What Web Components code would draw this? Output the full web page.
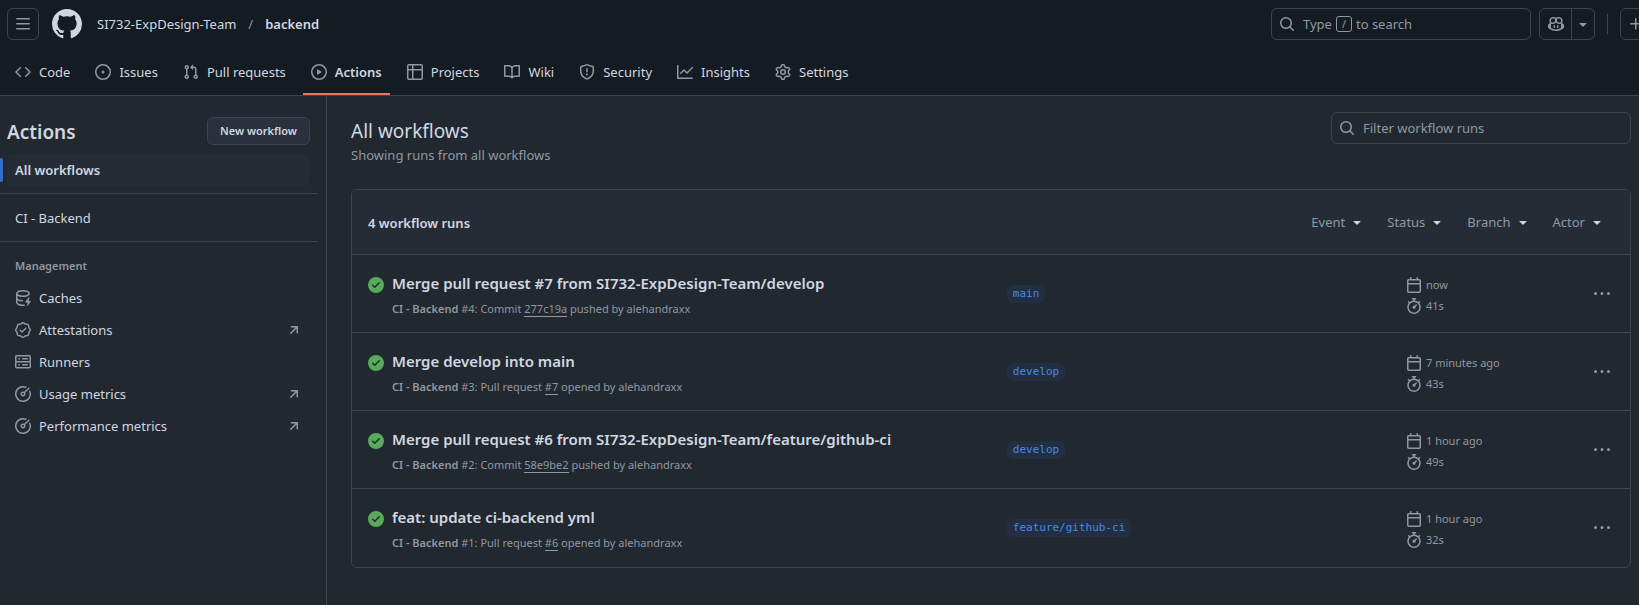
<!DOCTYPE html>
<html lang="en">
<head>
<meta charset="utf-8">
<meta name="viewport" content="width=device-width, initial-scale=1">
<title>Actions · SI732-ExpDesign-Team/backend</title>
<style>
  :root {
    --bg: #212830;
    --bg-inset: #151b23;
    --bg-raised: #262c36;
    --bg-button: #2a313c;
    --line: #3d444d;
    --fg: #d1d7e0;
    --muted: #9198a1;
    --accent: #478be6;
    --accent-strong: #316dca;
    --success: #57ab5a;
    --tab-line: #ec775c;
    --text-s: 11px;
    --text-m: 13px;
    --text-l: 15px;
    --text-xl: 19px;
  }
  body {
    margin: 0;
    min-height: 100vh;
    background: var(--bg);
    color: var(--fg);
    font: 13px/20px "Noto Sans", "Open Sans", sans-serif;
  }
</style>
</head>
<body>
<actions-page></actions-page>

<script>
const ICONS = {
  bars: 'M1 2.75A.75.75 0 0 1 1.75 2h12.5a.75.75 0 0 1 0 1.5H1.75A.75.75 0 0 1 1 2.75Zm0 5A.75.75 0 0 1 1.75 7h12.5a.75.75 0 0 1 0 1.5H1.75A.75.75 0 0 1 1 7.75ZM1.75 12h12.5a.75.75 0 0 1 0 1.5H1.75a.75.75 0 0 1 0-1.5Z',
  mark: 'M8 0c4.42 0 8 3.58 8 8a8.013 8.013 0 0 1-5.45 7.59c-.4.08-.55-.17-.55-.38 0-.27.01-1.13.01-2.2 0-.75-.25-1.23-.54-1.48 1.78-.2 3.65-.88 3.65-3.95 0-.88-.31-1.59-.82-2.15.08-.2.36-1.02-.08-2.12 0 0-.67-.22-2.2.82-.64-.18-1.32-.27-2-.27-.68 0-1.36.09-2 .27-1.53-1.03-2.2-.82-2.2-.82-.44 1.1-.16 1.92-.08 2.12-.51.56-.82 1.28-.82 2.15 0 3.06 1.86 3.75 3.64 3.95-.23.2-.44.55-.51 1.07-.46.21-1.61.55-2.33-.66-.15-.24-.6-.83-1.23-.82-.67.01-.27.38.01.53.34.19.73.9.82 1.13.16.45.68 1.31 2.69.94 0 .67.01 1.3.01 1.49 0 .21-.15.45-.55.38A7.995 7.995 0 0 1 0 8c0-4.42 3.58-8 8-8Z',
  search: 'M10.68 11.74a6 6 0 0 1-7.922-8.982 6 6 0 0 1 8.982 7.922l3.04 3.04a.749.749 0 0 1-.326 1.275.749.749 0 0 1-.734-.215ZM11.5 7a4.499 4.499 0 1 0-8.997 0A4.499 4.499 0 0 0 11.5 7Z',
  copilot: 'M7.998 15.035c-4.562 0-7.873-2.914-7.998-3.749V9.338c.085-.628.677-1.686 1.588-2.065.013-.07.024-.143.036-.218.029-.183.06-.384.126-.612-.201-.508-.254-1.084-.254-1.656 0-.87.128-1.769.693-2.484.579-.733 1.494-1.124 2.724-1.261 1.206-.134 2.262.034 2.944.765.05.053.096.108.139.165.044-.057.094-.112.143-.165.682-.731 1.738-.899 2.944-.765 1.23.137 2.145.528 2.724 1.261.566.715.693 1.614.693 2.484 0 .572-.053 1.148-.254 1.656.066.228.098.429.126.612.012.076.024.148.037.218.924.385 1.522 1.471 1.591 2.095v1.872c0 .766-3.351 3.795-8.002 3.795Zm0-1.485c2.28 0 4.584-1.11 5.002-1.433V7.862l-.023-.116c-.49.21-1.075.291-1.727.291-1.146 0-2.059-.327-2.71-.991A3.222 3.222 0 0 1 8 6.303a3.24 3.24 0 0 1-.544.743c-.65.664-1.563.991-2.71.991-.652 0-1.236-.081-1.727-.291l-.023.116v4.255c.419.323 2.722 1.433 5.002 1.433ZM6.762 2.83c-.193-.206-.637-.413-1.682-.297-1.019.113-1.479.404-1.713.7-.247.312-.369.789-.369 1.554 0 .793.129 1.171.308 1.371.162.181.519.379 1.442.379.853 0 1.339-.235 1.638-.54.315-.322.527-.827.617-1.553.117-.935-.037-1.395-.241-1.614Zm4.155-.297c-1.044-.116-1.488.091-1.681.297-.204.219-.359.679-.242 1.614.091.726.303 1.231.618 1.553.299.305.784.54 1.638.54.922 0 1.28-.198 1.442-.379.179-.2.308-.578.308-1.371 0-.765-.123-1.242-.37-1.554-.233-.296-.693-.587-1.713-.7ZM6.25 9.037a.75.75 0 0 1 .75.75v1.501a.75.75 0 0 1-1.5 0V9.787a.75.75 0 0 1 .75-.75Zm4.25.75v1.501a.75.75 0 0 1-1.5 0V9.787a.75.75 0 0 1 1.5 0Z',
  caret: 'm4.427 7.427 3.396 3.396a.25.25 0 0 0 .354 0l3.396-3.396A.25.25 0 0 0 11.396 7H4.604a.25.25 0 0 0-.177.427Z',
  plus: 'M7.75 2a.75.75 0 0 1 .75.75V7h4.25a.75.75 0 0 1 0 1.5H8.5v4.25a.75.75 0 0 1-1.5 0V8.5H2.75a.75.75 0 0 1 0-1.5H7V2.75A.75.75 0 0 1 7.75 2Z',
  code: 'm11.28 3.22 4.25 4.25a.75.75 0 0 1 0 1.06l-4.25 4.25a.749.749 0 0 1-1.275-.326.749.749 0 0 1 .215-.734L13.94 8l-3.72-3.72a.749.749 0 0 1 .326-1.275.749.749 0 0 1 .734.215Zm-6.56 0a.751.751 0 0 1 1.042.018.751.751 0 0 1 .018 1.042L2.06 8l3.72 3.72a.749.749 0 0 1-.326 1.275.749.749 0 0 1-.734-.215L.47 8.53a.75.75 0 0 1 0-1.06Z',
  issue: 'M8 9.5a1.5 1.5 0 1 0 0-3 1.5 1.5 0 0 0 0 3ZM8 0a8 8 0 1 1 0 16A8 8 0 0 1 8 0ZM1.5 8a6.5 6.5 0 1 0 13 0 6.5 6.5 0 0 0-13 0Z',
  pull: 'M1.5 3.25a2.25 2.25 0 1 1 3 2.122v5.256a2.251 2.251 0 1 1-1.5 0V5.372A2.25 2.25 0 0 1 1.5 3.25Zm5.677-.177L9.573.677A.25.25 0 0 1 10 .854V2.5h1A2.5 2.5 0 0 1 13.5 5v5.628a2.251 2.251 0 1 1-1.5 0V5a1 1 0 0 0-1-1h-1v1.646a.25.25 0 0 1-.427.177L7.177 3.427a.25.25 0 0 1 0-.354ZM3.75 2.5a.75.75 0 1 0 0 1.5.75.75 0 0 0 0-1.5Zm0 9.5a.75.75 0 1 0 0 1.5.75.75 0 0 0 0-1.5Zm8.25.75a.75.75 0 1 0 1.5 0 .75.75 0 0 0-1.5 0Z',
  play: 'M8 0a8 8 0 1 1 0 16A8 8 0 0 1 8 0ZM1.5 8a6.5 6.5 0 1 0 13 0 6.5 6.5 0 0 0-13 0Zm4.879-2.773 4.264 2.559a.25.25 0 0 1 0 .428l-4.264 2.559A.25.25 0 0 1 6 10.559V5.442a.25.25 0 0 1 .379-.215Z',
  table: 'M0 1.75C0 .784.784 0 1.75 0h12.5C15.216 0 16 .784 16 1.75v12.5A1.75 1.75 0 0 1 14.25 16H1.75A1.75 1.75 0 0 1 0 14.25ZM6.5 6.5v8h7.75a.25.25 0 0 0 .25-.25V6.5Zm8-1.5V1.75a.25.25 0 0 0-.25-.25H6.5V5Zm-13 1.5v7.75c0 .138.112.25.25.25H5v-8ZM5 5V1.5H1.75a.25.25 0 0 0-.25.25V5Z',
  book: 'M0 1.75A.75.75 0 0 1 .75 1h4.253c1.227 0 2.317.59 3 1.501A3.743 3.743 0 0 1 11.006 1h4.245a.75.75 0 0 1 .75.75v10.5a.75.75 0 0 1-.75.75h-4.507a2.25 2.25 0 0 0-1.591.659l-.622.621a.75.75 0 0 1-1.06 0l-.622-.621A2.25 2.25 0 0 0 5.258 13H.75a.75.75 0 0 1-.75-.75Zm7.251 10.324.004-5.073-.002-2.253A2.25 2.25 0 0 0 5.003 2.5H1.5v9h3.757a3.75 3.75 0 0 1 1.994.574ZM8.755 4.75l-.004 7.322a3.752 3.752 0 0 1 1.992-.572H14.5v-9h-3.495a2.25 2.25 0 0 0-2.25 2.25Z',
  shield: 'M7.467.133a1.748 1.748 0 0 1 1.066 0l5.25 1.68A1.75 1.75 0 0 1 15 3.48V7c0 1.566-.32 3.182-1.303 4.682-.983 1.498-2.585 2.813-5.032 3.855a1.697 1.697 0 0 1-1.33 0c-2.447-1.042-4.049-2.357-5.032-3.855C1.32 10.182 1 8.566 1 7V3.48a1.75 1.75 0 0 1 1.217-1.667Zm.61 1.429a.25.25 0 0 0-.153 0l-5.25 1.68a.25.25 0 0 0-.174.238V7c0 1.358.275 2.666 1.057 3.86.784 1.194 2.121 2.34 4.366 3.297a.196.196 0 0 0 .154 0c2.245-.956 3.582-2.104 4.366-3.298C13.225 9.666 13.5 8.36 13.5 7V3.48a.251.251 0 0 0-.174-.237l-5.25-1.68ZM8.75 4.75v3a.75.75 0 0 1-1.5 0v-3a.75.75 0 0 1 1.5 0ZM9 10.5a1 1 0 1 1-2 0 1 1 0 0 1 2 0Z',
  graph: 'M1.5 1.75V13.5h13.75a.75.75 0 0 1 0 1.5H.75a.75.75 0 0 1-.75-.75V1.75a.75.75 0 0 1 1.5 0Zm14.28 2.53-5.25 5.25a.75.75 0 0 1-1.06 0L7 7.06 4.28 9.78a.751.751 0 0 1-1.042-.018.751.751 0 0 1-.018-1.042l3.25-3.25a.75.75 0 0 1 1.06 0L10 7.94l4.72-4.72a.751.751 0 0 1 1.042.018.751.751 0 0 1 .018 1.042Z',
  gear: 'M8 0a8.2 8.2 0 0 1 .701.031C9.444.095 9.99.645 10.16 1.29l.288 1.107c.018.066.079.158.212.224.231.114.454.243.668.386.123.082.233.09.299.071l1.103-.303c.644-.176 1.392.021 1.82.63.27.385.506.792.704 1.218.315.675.111 1.422-.364 1.891l-.814.806c-.049.048-.098.147-.088.294.016.257.016.515 0 .772-.01.147.038.246.088.294l.814.806c.475.469.679 1.216.364 1.891a7.977 7.977 0 0 1-.704 1.217c-.428.61-1.176.807-1.82.63l-1.102-.302c-.067-.019-.177-.011-.3.071a5.909 5.909 0 0 1-.668.386c-.133.066-.194.158-.211.224l-.29 1.106c-.168.646-.715 1.196-1.458 1.26a8.006 8.006 0 0 1-1.402 0c-.743-.064-1.289-.614-1.458-1.26l-.289-1.106c-.018-.066-.079-.158-.212-.224a5.738 5.738 0 0 1-.668-.386c-.123-.082-.233-.09-.299-.071l-1.103.303c-.644.176-1.392-.021-1.82-.63a8.12 8.12 0 0 1-.704-1.218c-.315-.675-.111-1.422.363-1.891l.815-.806c.05-.048.098-.147.088-.294a6.214 6.214 0 0 1 0-.772c.01-.147-.038-.246-.088-.294l-.815-.806C.635 6.045.431 5.298.746 4.623a7.92 7.92 0 0 1 .704-1.217c.428-.61 1.176-.807 1.82-.63l1.102.302c.067.019.177.011.3-.071.214-.143.437-.272.668-.386.133-.066.194-.158.211-.224l.29-1.106C6.009.645 6.556.095 7.299.03 7.53.01 7.764 0 8 0Zm-.571 1.525c-.036.003-.108.036-.137.146l-.289 1.105c-.147.561-.549.967-.998 1.189-.173.086-.34.183-.5.29-.417.278-.97.423-1.529.27l-1.103-.303c-.109-.03-.175.016-.195.045-.22.312-.412.644-.573.99-.014.031-.021.11.059.19l.815.806c.411.406.562.957.53 1.456a4.709 4.709 0 0 0 0 .582c.032.499-.119 1.05-.53 1.456l-.815.806c-.081.08-.073.159-.059.19.162.346.353.677.573.989.02.03.085.076.195.046l1.102-.303c.56-.153 1.113-.008 1.53.27.161.107.328.204.501.29.447.222.85.629.997 1.189l.289 1.105c.029.109.101.143.137.146a6.6 6.6 0 0 0 1.142 0c.036-.003.108-.036.137-.146l.289-1.105c.147-.561.549-.967.998-1.189.173-.086.34-.183.5-.29.417-.278.97-.423 1.529-.27l1.103.303c.109.029.175-.016.195-.045.22-.313.411-.644.573-.99.014-.031.021-.11-.059-.19l-.815-.806c-.411-.406-.562-.957-.53-1.456a4.709 4.709 0 0 0 0-.582c-.032-.499.119-1.05.53-1.456l.815-.806c.081-.08.073-.159.059-.19a6.464 6.464 0 0 0-.573-.989c-.02-.03-.085-.076-.195-.046l-1.102.303c-.56.153-1.113.008-1.53-.27a4.44 4.44 0 0 0-.501-.29c-.447-.222-.85-.629-.997-1.189l-.289-1.105c-.029-.11-.101-.143-.137-.146a6.6 6.6 0 0 0-1.142 0ZM11 8a3 3 0 1 1-6 0 3 3 0 0 1 6 0ZM9.5 8a1.5 1.5 0 1 0-3.001.001A1.5 1.5 0 0 0 9.5 8Z',
  cache: 'M2.5 5.724V8c0 .248.238.7 1.169 1.159.874.43 2.144.745 3.62.822a.75.75 0 1 1-.078 1.498c-1.622-.085-3.102-.432-4.204-.975a5.565 5.565 0 0 1-.507-.28V12.5c0 .133.058.318.282.551.227.237.591.483 1.101.707 1.015.447 2.47.742 4.117.742.406 0 .802-.018 1.183-.052a.751.751 0 1 1 .134 1.494C8.89 15.98 8.45 16 8 16c-1.805 0-3.475-.32-4.721-.869-.623-.274-1.173-.619-1.579-1.041-.408-.425-.7-.964-.7-1.59v-9c0-.626.292-1.165.7-1.591.406-.42.956-.766 1.579-1.04C4.525.32 6.195 0 8 0c1.806 0 3.476.32 4.721.869.623.274 1.173.619 1.579 1.041.408.425.7.964.7 1.59 0 .626-.292 1.165-.7 1.591-.406.42-.956.766-1.578 1.04C11.475 6.68 9.805 7 8 7c-1.805 0-3.475-.32-4.721-.869a6.15 6.15 0 0 1-.779-.407Zm0-2.224c0 .133.058.318.282.551.227.237.591.483 1.101.707C4.898 5.205 6.353 5.5 8 5.5c1.646 0 3.101-.295 4.118-.742.508-.224.873-.471 1.1-.708.224-.232.282-.417.282-.55 0-.133-.058-.318-.282-.551-.227-.237-.591-.483-1.101-.707C11.102 1.795 9.647 1.5 8 1.5c-1.646 0-3.101.295-4.118.742-.508.224-.873.471-1.1.708-.224.232-.282.417-.282.55ZM14.49 7.582a.375.375 0 0 0-.66-.313l-3.625 4.625a.375.375 0 0 0 .295.606h2.127l-.619 2.922a.375.375 0 0 0 .666.304l3.125-4.125A.375.375 0 0 0 15.5 11h-1.778l.769-3.418Z',
  verified: 'm9.585.52.929.68c.153.112.331.186.518.215l1.138.175a2.678 2.678 0 0 1 2.24 2.24l.174 1.139c.029.187.103.365.215.518l.68.928a2.677 2.677 0 0 1 0 3.17l-.68.928a1.174 1.174 0 0 0-.215.518l-.175 1.138a2.678 2.678 0 0 1-2.241 2.241l-1.138.175a1.17 1.17 0 0 0-.518.215l-.928.68a2.677 2.677 0 0 1-3.17 0l-.928-.68a1.174 1.174 0 0 0-.518-.215L3.83 14.41a2.678 2.678 0 0 1-2.24-2.24l-.175-1.138a1.17 1.17 0 0 0-.215-.518l-.68-.928a2.677 2.677 0 0 1 0-3.17l.68-.928c.112-.153.186-.331.215-.518l.175-1.14a2.678 2.678 0 0 1 2.24-2.24l1.139-.175c.187-.029.365-.103.518-.215l.928-.68a2.677 2.677 0 0 1 3.17 0ZM7.303 1.728l-.927.68a2.67 2.67 0 0 1-1.18.489l-1.137.174a1.179 1.179 0 0 0-.987.987l-.174 1.136a2.677 2.677 0 0 1-.489 1.18l-.68.928a1.18 1.18 0 0 0 0 1.394l.68.927c.256.348.424.753.489 1.18l.174 1.137c.078.509.478.909.987.987l1.136.174a2.67 2.67 0 0 1 1.18.489l.928.68c.414.305.979.305 1.394 0l.927-.68a2.67 2.67 0 0 1 1.18-.489l1.137-.174a1.18 1.18 0 0 0 .987-.987l.174-1.136a2.67 2.67 0 0 1 .489-1.18l.68-.928a1.176 1.176 0 0 0 0-1.394l-.68-.927a2.686 2.686 0 0 1-.489-1.18l-.174-1.137a1.179 1.179 0 0 0-.987-.987l-1.136-.174a2.677 2.677 0 0 1-1.18-.489l-.928-.68a1.176 1.176 0 0 0-1.394 0ZM11.28 6.78l-3.75 3.75a.75.75 0 0 1-1.06 0L4.72 8.78a.751.751 0 0 1 .018-1.042.751.751 0 0 1 1.042-.018L7 8.94l3.22-3.22a.751.751 0 0 1 1.042.018.751.751 0 0 1 .018 1.042Z',
  server: 'M1.75 1h12.5c.966 0 1.75.784 1.75 1.75v4c0 .372-.116.717-.314 1 .198.283.314.628.314 1v4a1.75 1.75 0 0 1-1.75 1.75H1.75A1.75 1.75 0 0 1 0 12.75v-4c0-.358.109-.707.314-1a1.739 1.739 0 0 1-.314-1v-4C0 1.784.784 1 1.75 1ZM1.5 2.75v4c0 .138.112.25.25.25h12.5a.25.25 0 0 0 .25-.25v-4a.25.25 0 0 0-.25-.25H1.75a.25.25 0 0 0-.25.25Zm.25 5.75a.25.25 0 0 0-.25.25v4c0 .138.112.25.25.25h12.5a.25.25 0 0 0 .25-.25v-4a.25.25 0 0 0-.25-.25ZM7 4.75A.75.75 0 0 1 7.75 4h4.5a.75.75 0 0 1 0 1.5h-4.5A.75.75 0 0 1 7 4.75ZM7.75 10h4.5a.75.75 0 0 1 0 1.5h-4.5a.75.75 0 0 1 0-1.5ZM3 4.75A.75.75 0 0 1 3.75 4h.5a.75.75 0 0 1 0 1.5h-.5A.75.75 0 0 1 3 4.75ZM3.75 10h.5a.75.75 0 0 1 0 1.5h-.5a.75.75 0 0 1 0-1.5Z',
  meter: 'M8 1.5a6.5 6.5 0 1 0 6.016 4.035.75.75 0 0 1 1.388-.57 8 8 0 1 1-4.37-4.37.75.75 0 0 1-.569 1.389A6.473 6.473 0 0 0 8 1.5Zm6.28.22a.75.75 0 0 1 0 1.06l-4.063 4.064a2.5 2.5 0 1 1-1.06-1.06L13.22 1.72a.75.75 0 0 1 1.06 0ZM7 8a1 1 0 1 0 2 0 1 1 0 0 0-2 0Z',
  external: 'M4.53 4.75A.75.75 0 0 1 5.28 4h6.01a.75.75 0 0 1 .75.75v6.01a.75.75 0 0 1-1.5 0v-4.2l-5.26 5.261a.749.749 0 0 1-1.275-.326.749.749 0 0 1 .215-.734L9.48 5.5h-4.2a.75.75 0 0 1-.75-.75Z',
  success: 'M8 16A8 8 0 1 1 8 0a8 8 0 0 1 0 16Zm3.78-9.72a.751.751 0 0 0-.018-1.042.751.751 0 0 0-1.042-.018L6.75 9.19 5.28 7.72a.751.751 0 0 0-1.042.018.751.751 0 0 0-.018 1.042l2 2a.75.75 0 0 0 1.06 0Z',
  calendar: 'M4.75 0a.75.75 0 0 1 .75.75V2h5V.75a.75.75 0 0 1 1.5 0V2h1.25c.966 0 1.75.784 1.75 1.75v10.5A1.75 1.75 0 0 1 13.25 16H2.75A1.75 1.75 0 0 1 1 14.25V3.75C1 2.784 1.784 2 2.75 2H4V.75A.75.75 0 0 1 4.75 0ZM2.5 7.5v6.75c0 .138.112.25.25.25h10.5a.25.25 0 0 0 .25-.25V7.5Zm10.75-4H2.75a.25.25 0 0 0-.25.25V6h11V3.75a.25.25 0 0 0-.25-.25Z',
  stopwatch: 'M5.75.75A.75.75 0 0 1 6.5 0h3a.75.75 0 0 1 0 1.5h-.75v1l-.001.041a6.724 6.724 0 0 1 3.464 1.435l.007-.006.75-.75a.749.749 0 0 1 1.275.326.749.749 0 0 1-.215.734l-.75.75-.006.007a6.75 6.75 0 1 1-10.548 0L2.72 5.03l-.75-.75a.751.751 0 0 1 .018-1.042.751.751 0 0 1 1.042-.018l.75.75.007.006A6.72 6.72 0 0 1 7.25 2.541V1.5H6.5a.75.75 0 0 1-.75-.75ZM8 14.5a5.25 5.25 0 1 0-.001-10.501A5.25 5.25 0 0 0 8 14.5Zm.389-6.7 1.33-1.33a.75.75 0 1 1 1.061 1.06L9.45 8.861A1.503 1.503 0 0 1 8 10.75a1.499 1.499 0 1 1 .389-2.95Z',
  dots: 'M8 9a1.5 1.5 0 1 0 0-3 1.5 1.5 0 0 0 0 3ZM1.5 9a1.5 1.5 0 1 0 0-3 1.5 1.5 0 0 0 0 3Zm13 0a1.5 1.5 0 1 0 0-3 1.5 1.5 0 0 0 0 3Z'
};

const RESET = `
  *, *::before, *::after { box-sizing: border-box; }
  a { color: inherit; text-decoration: none; }
  button { margin: 0; padding: 0; border: 0; background: none; color: inherit; font: inherit; cursor: pointer; }
  h1, h2, h3, p, ul { margin: 0; padding: 0; font: inherit; list-style: none; }
`;

function define(name, render) {
  customElements.define(name, class extends HTMLElement {
    connectedCallback() {
      if (this.shadowRoot) return;
      const template = document.createElement('template');
      template.innerHTML = render(this);
      this.attachShadow({ mode: 'open' }).append(template.content.cloneNode(true));
    }
  });
}

define('gh-icon', el => `
  <style>
    :host { display: block; flex: none; width: 16px; height: 16px; color: var(--icon-color, var(--muted)); }
    svg { display: block; width: 100%; height: 100%; fill: currentColor; }
  </style>
  <svg viewBox="0 0 16 16" aria-hidden="true"><path d="${ICONS[el.getAttribute('name')]}"/></svg>
`);

define('top-bar', () => `
  <style>${RESET}
    :host { display: flex; align-items: center; gap: 8px; height: 48px; padding: 0 0 1px 7px; overflow: hidden; }
    .square { display: grid; place-items: center; flex: none; width: 32px; height: 32px; border: 1px solid var(--line); border-radius: 6px; }
    .logo { padding: 0 5px; }
    .logo gh-icon { width: 30px; height: 30px; --icon-color: var(--fg); }
    .crumbs { display: flex; gap: 12px; flex: 1; padding-left: 2px; white-space: nowrap; }
    .crumbs span { color: var(--muted); }
    .crumbs b { font-weight: 600; }
    .search { display: flex; align-items: center; gap: 8px; flex: 0 1 260px; height: 32px; padding: 0 7px; border: 1px solid var(--line); border-radius: 6px; color: var(--muted); white-space: nowrap; }
    .search span { display: flex; align-items: center; gap: 4px; }
    kbd { width: 16px; height: 16px; border: 1px solid var(--muted); border-radius: 3px; font: 11px/14px "Noto Sans", sans-serif; text-align: center; }
    .split { display: flex; flex: none; height: 32px; border: 1px solid var(--line); border-radius: 6px; }
    .split button { display: grid; place-items: center; width: 31px; }
    .split button + button { width: 23px; border-left: 1px solid var(--line); }
    .rule { flex: none; width: 1px; height: 20px; margin: 0 4px; background: var(--line); }
    .create { margin-right: -13px; }
  </style>
  <button class="square" aria-label="Open menu"><gh-icon name="bars"></gh-icon></button>
  <a class="logo" href="#home" aria-label="Homepage"><gh-icon name="mark"></gh-icon></a>
  <nav class="crumbs" aria-label="Breadcrumb"><a href="#team">SI732-ExpDesign-Team</a><span>/</span><a href="#repo"><b>backend</b></a></nav>
  <button class="search"><gh-icon name="search"></gh-icon><span>Type <kbd>/</kbd> to search</span></button>
  <div class="split"><button aria-label="Chat"><gh-icon name="copilot"></gh-icon></button><button aria-label="More chat options"><gh-icon name="caret"></gh-icon></button></div>
  <div class="rule"></div>
  <button class="square create" aria-label="Create new"><gh-icon name="plus"></gh-icon></button>
`);

define('repo-tab', el => `
  <style>${RESET}
    :host { display: block; }
    a { display: flex; align-items: center; gap: 8px; height: 47px; padding: 2px 8px 0; border-bottom: 2px solid transparent; white-space: nowrap; }
    :host([current]) a { border-color: var(--tab-line); font-weight: 600; }
  </style>
  <a href="#${el.getAttribute('icon')}" ${el.hasAttribute('current') ? 'aria-current="page"' : ''}><gh-icon name="${el.getAttribute('icon')}"></gh-icon><slot></slot></a>
`);

define('repo-tabs', () => `
  <style>${RESET}
    :host { display: block; }
    nav { display: flex; gap: 9px; padding-left: 7px; }
  </style>
  <nav aria-label="Repository"><slot></slot></nav>
`);

define('side-link', el => `
  <style>${RESET}
    :host { display: block; }
    a { display: flex; align-items: center; gap: 8px; height: 32px; margin: 0 16px 0 7px; padding: 0 8px; border-radius: 6px; position: relative; }
    .label { flex: 1; }
    :host([current]) a { background: var(--bg-raised); font-weight: 600; }
    :host([current]) a::before { content: ""; position: absolute; left: -8px; top: 4px; width: 4px; height: 24px; border-radius: 6px; background: var(--accent-strong); }
  </style>
  <a href="#${el.id}" ${el.hasAttribute('current') ? 'aria-current="page"' : ''}>
    ${el.hasAttribute('icon') ? `<gh-icon name="${el.getAttribute('icon')}"></gh-icon>` : ''}
    <span class="label"><slot></slot></span>
    ${el.hasAttribute('external') ? '<gh-icon name="external"></gh-icon>' : ''}
  </a>
`);

define('side-bar', () => `
  <style>${RESET}
    :host { display: block; border-right: 1px solid var(--line); padding-top: 21px; }
    header { display: flex; align-items: center; justify-content: space-between; height: 28px; margin: 0 16px 9px 7px; }
    h2 { padding-top: 2px; font-size: var(--text-xl); font-weight: 600; }
    header button { height: 28px; padding: 0 12px; border: 1px solid var(--line); border-radius: 6px; background: var(--bg-button); font-size: var(--text-s); font-weight: 600; }
    hr { height: 1px; margin: 7px 8px 8px 0; border: 0; background: var(--line); }
    h3 { margin: 15px 0 7px 15px; color: var(--muted); font-size: var(--text-s); font-weight: 600; line-height: 18px; }
  </style>
  <header><h2>Actions</h2><button>New workflow</button></header>
  <nav aria-label="Actions">
    <side-link id="all" current>All workflows</side-link>
    <hr>
    <side-link id="ci">CI - Backend</side-link>
    <hr>
    <h3>Management</h3>
    <side-link id="caches" icon="cache">Caches</side-link>
    <side-link id="attestations" icon="verified" external>Attestations</side-link>
    <side-link id="runners" icon="server">Runners</side-link>
    <side-link id="usage" icon="meter" external>Usage metrics</side-link>
    <side-link id="performance" icon="meter" external>Performance metrics</side-link>
  </nav>
`);

define('filter-menu', () => `
  <style>${RESET}
    :host { display: block; }
    button { display: flex; align-items: center; gap: 4px; color: var(--muted); }
    gh-icon { --icon-color: var(--fg); }
  </style>
  <button aria-haspopup="menu"><slot></slot><gh-icon name="caret"></gh-icon></button>
`);

define('workflow-run', el => {
  const at = name => el.getAttribute(name);
  return `
  <style>${RESET}
    :host { display: grid; grid-template-columns: minmax(0, 16fr) minmax(0, 10fr) 188px 20px; align-items: center; min-height: 78px; padding: 0 16px; border-top: 1px solid var(--line); }
    .run { display: grid; grid-template-columns: 16px 1fr; column-gap: 8px; align-items: end; padding-top: 2px; }
    .run gh-icon { margin-bottom: 2px; --icon-color: var(--success); }
    h3 { font-size: var(--text-l); font-weight: 600; line-height: 24px; }
    p { grid-column: 2; margin-top: 4px; color: var(--muted); font-size: var(--text-s); line-height: 20px; }
    p b { font-weight: 600; }
    p a { border-bottom: 1px solid var(--muted); }
    .branch { justify-self: start; margin-top: 1px; padding: 0 6px; border-radius: 6px; background: #222e42; color: var(--accent); font: 11px/18px "DejaVu Sans Mono", monospace; }
    .when { display: grid; gap: 1px; padding-top: 4px; color: var(--muted); font-size: var(--text-s); }
    .when div { display: flex; align-items: center; gap: 4px; height: 20px; }
  </style>
  <div class="run">
    <gh-icon name="success"></gh-icon>
    <h3><a href="#run-${at('number')}"><slot></slot></a></h3>
    <p><b>CI - Backend</b> #${at('number')}: ${at('kind')} <a href="#source">${at('source')}</a> ${at('verb')} by <span>alehandraxx</span></p>
  </div>
  <a class="branch" href="#branch">${at('branch')}</a>
  <div class="when">
    <div><gh-icon name="calendar"></gh-icon><span>${at('when')}</span></div>
    <div><gh-icon name="stopwatch"></gh-icon><span>${at('took')}</span></div>
  </div>
  <button aria-label="Show options"><gh-icon name="dots"></gh-icon></button>
`; });

define('run-list', () => `
  <style>${RESET}
    :host { display: block; padding-bottom: 1px; border: 1px solid var(--line); border-radius: 6px; overflow: hidden; }
    header { display: flex; align-items: center; justify-content: space-between; height: 64px; padding: 0 25px 0 16px; background: var(--bg-raised); }
    h2 { padding-top: 2px; font-weight: 600; }
    .filters { display: flex; gap: 22px; }
  </style>
  <header>
    <h2>4 workflow runs</h2>
    <div class="filters"><filter-menu>Event</filter-menu><filter-menu>Status</filter-menu><filter-menu>Branch</filter-menu><filter-menu>Actor</filter-menu></div>
  </header>
  <slot></slot>
`);

define('run-filter', () => `
  <style>${RESET}
    :host { display: block; }
    label { display: flex; align-items: center; gap: 8px; height: 32px; padding: 0 7px; border: 1px solid var(--line); border-radius: 6px; }
    input { flex: 1; min-width: 0; padding: 0; border: 0; outline: 0; background: none; color: var(--fg); font: inherit; }
    input::placeholder { color: var(--muted); opacity: 1; }
  </style>
  <label><gh-icon name="search"></gh-icon><input type="text" placeholder="Filter workflow runs" aria-label="Filter workflow runs"></label>
`);

define('actions-page', () => `
  <style>${RESET}
    :host { display: flex; flex-direction: column; min-height: 100vh; overflow: hidden; }
    .top { border-bottom: 1px solid var(--line); background: var(--bg-inset); }
    .body { display: grid; grid-template-columns: 327px minmax(0, 1fr); flex: 1; }
    main { padding: 16px 8px 24px 24px; }
    .title { display: flex; align-items: flex-start; justify-content: space-between; margin-bottom: 24px; }
    h1 { padding-top: 4px; font-size: var(--text-xl); line-height: 30px; }
    .title p { color: var(--muted); line-height: 19px; }
    run-filter { width: 300px; }
  </style>
  <div class="top">
    <top-bar></top-bar>
    <repo-tabs>
      <repo-tab icon="code">Code</repo-tab>
      <repo-tab icon="issue">Issues</repo-tab>
      <repo-tab icon="pull">Pull requests</repo-tab>
      <repo-tab icon="play" current>Actions</repo-tab>
      <repo-tab icon="table">Projects</repo-tab>
      <repo-tab icon="book">Wiki</repo-tab>
      <repo-tab icon="shield">Security</repo-tab>
      <repo-tab icon="graph">Insights</repo-tab>
      <repo-tab icon="gear">Settings</repo-tab>
    </repo-tabs>
  </div>
  <div class="body">
    <side-bar></side-bar>
    <main>
      <div class="title">
        <div><h1>All workflows</h1><p>Showing runs from all workflows</p></div>
        <run-filter></run-filter>
      </div>
      <run-list>
        <workflow-run number="4" kind="Commit" source="277c19a" verb="pushed" branch="main" when="now" took="41s">Merge pull request #7 from SI732-ExpDesign-Team/develop</workflow-run>
        <workflow-run number="3" kind="Pull request" source="#7" verb="opened" branch="develop" when="7 minutes ago" took="43s">Merge develop into main</workflow-run>
        <workflow-run number="2" kind="Commit" source="58e9be2" verb="pushed" branch="develop" when="1 hour ago" took="49s">Merge pull request #6 from SI732-ExpDesign-Team/feature/github-ci</workflow-run>
        <workflow-run number="1" kind="Pull request" source="#6" verb="opened" branch="feature/github-ci" when="1 hour ago" took="32s">feat: update ci-backend yml</workflow-run>
      </run-list>
    </main>
  </div>
`);
</script>
</body>
</html>
